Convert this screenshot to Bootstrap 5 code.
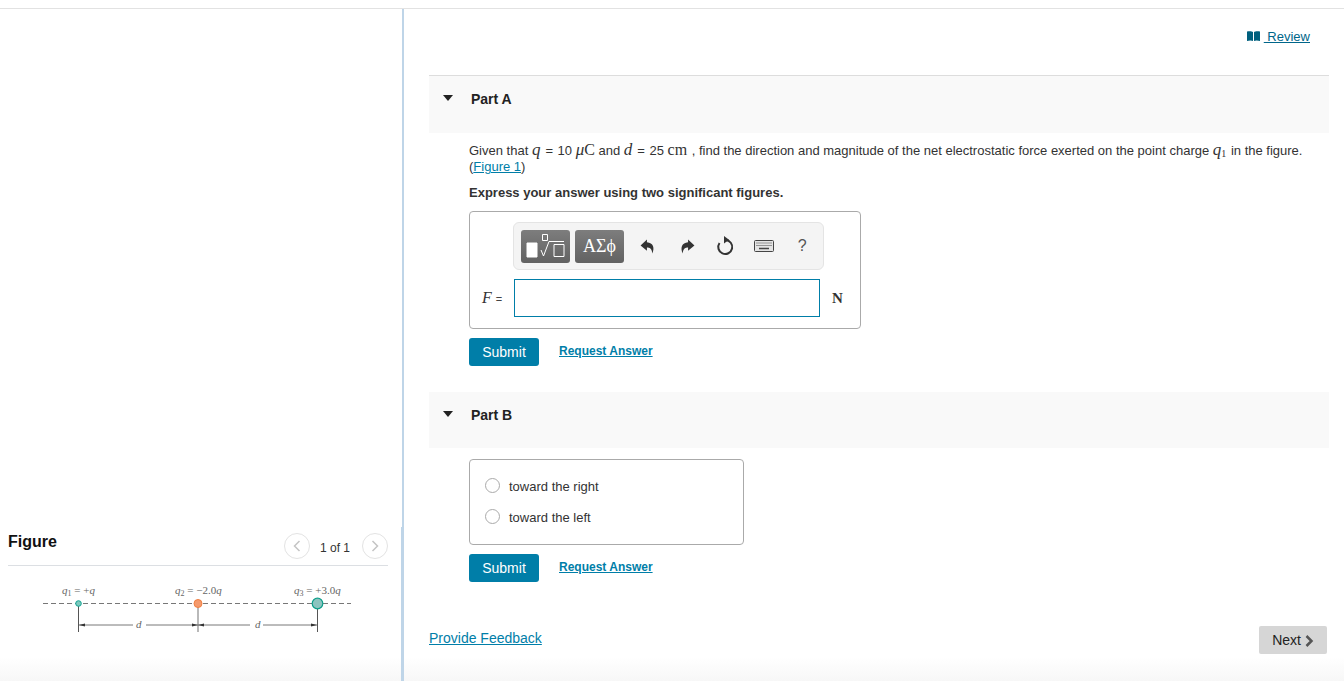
<!DOCTYPE html>
<html lang="en">
<head>
  <meta charset="UTF-8">
  <title>Part A</title>
  <meta name="viewport" content="width=device-width, initial-scale=1">
  <link rel="stylesheet" href="https://cdn.jsdelivr.net/npm/bootstrap@5.3.0/dist/css/bootstrap.min.css">
  <style>
    html, body { height: 100%; overflow: hidden; }
    body {
      font-family: "Liberation Sans", Arial, sans-serif;
      font-size: 13px;
      line-height: 16px;
      color: #333;
      padding-top: 8px;
      background: linear-gradient(#fff, #f7f7f7) no-repeat bottom / 100% 24px;
    }
    a { color: #007ea8; }
    .math { font-family: "Liberation Serif", "Times New Roman", serif; font-size: 16px; line-height: 1; }
    .math i { font-size: 17px; }
    .math small { font-family: "Liberation Sans", sans-serif; font-size: 13px; margin: 0 1px; }
    .math sub { font-size: 10px; bottom: -.2em; line-height: 0; }
    .math-unit { margin-right: 1px; }
    .math-end { margin-right: 1px; }
    .shell { height: 673px; border-top: 1px solid #e2e2e2; }
    .figure-pane { width: 404px; padding: 0 14px 43px 8px; border-right: 2px solid #bfd5e8; flex: none; position: relative; }
    .figure-pane::after { content: ""; position: absolute; right: 0; bottom: 0; width: 1px; height: 154px; background: #bfd5e8; }
    .figure-head { height: 34px; border-bottom: 1px solid #dcdfe3; }
    .figure-title { font-size: 16px; font-weight: 700; color: #111; margin: 0; line-height: 20px; }
    .pager { margin-top: 1px; }
    .pager-btn { width: 26px; height: 26px; border: 1px solid #e3e3e3; border-radius: 50%; background: #fff; padding: 0; }
    .pager-text { font-size: 12px; margin: 4px 12px 0 10px; color: #333; }
    .work-pane { padding: 0 15px 0 25px; min-width: 0; }
    .review-row { height: 66px; padding: 20px 19px 0 0; }
    .review-link { color: #00668a; }
    .part-head { background: #f9f9f9; padding: 15px 14px 0; font-size: 14px; font-weight: 700; color: #222; }
    .part-a { height: 58px; border-top: 1px solid #ddd; }
    .part-b { height: 56px; margin-top: 26px; }
    .caret-down { width: 0; height: 0; border: 5.5px solid transparent; border-top: 6px solid #222; border-bottom: 0; margin-right: 18px; }
    .part-body { padding-left: 40px; }
    .prompt { margin: 8px 0 10px; width: 860px; }
    .prompt-bold { font-weight: 700; margin-bottom: 10px; }
    .answer-box { width: 392px; height: 118px; border: 1px solid #aaa; border-radius: 4px; padding: 10px 0 0 12px; }
    .tool-bar { width: 311px; height: 48px; margin-left: 31px; background: #f4f4f4; border: 1px solid #e4e4e4; border-radius: 6px; padding: 6px 7px; }
    .tmpl-btn { height: 33px; width: 49px; flex: none; border-radius: 3px; background: linear-gradient(#7d7d7d, #626262); display: flex; align-items: center; justify-content: center; color: #fff; font-family: "Liberation Serif", serif; font-size: 18px; }
    .tool-gap { margin-left: 5px; }
    .tool-icon { width: 38.5px; flex: none; display: flex; align-items: center; justify-content: center; color: #555; }
    .input-row { margin-top: 9px; }
    .f-label { width: 32px; font-size: 11px; color: #444; }
    .f-label i { font-family: "Liberation Serif", serif; font-size: 16px; color: #333; margin-right: 4px; }
    .answer-input { width: 306px; height: 38px; border: 1px solid #007ea8; background: #fff; }
    .unit { font-family: "Liberation Serif", serif; font-weight: 700; font-size: 15px; margin-left: 12px; }
    .action-row { margin-top: 9px; }
    .btn.submit-btn { width: 70px; height: 28px; padding: 0; border: 0; border-radius: 3px; background: #007ea8; color: #fff; font-size: 14px; line-height: 28px; }
    .answer-link { font-size: 12px; font-weight: 700; margin-left: 20px; margin-top: -2px; }
    .choice-box { width: 275px; height: 86px; margin-top: 11px; border: 1px solid #aaa; border-radius: 4px; padding: 11px 15px; }
    .choice-row { height: 31px; display: flex; align-items: center; }
    .radio-dot { width: 15px; height: 15px; border: 1px solid #aaa; border-radius: 50%; background: #fff; margin-right: 9px; margin-top: -2px; flex: none; }
    .feedback-row { margin-top: 44px; padding-right: 2px; }
    .feedback-link { font-size: 14px; margin-top: 4px; }
    .btn.next-btn { width: 68px; height: 28px; padding: 0; border: 0; border-radius: 2px; background: #d6d6d6; color: #222; font-size: 14px; line-height: 28px; }
  </style>
</head>
<body>
  <div class="shell d-flex">
    <aside class="figure-pane d-flex flex-column justify-content-end">
      <div class="figure-head d-flex justify-content-between align-items-start">
        <h2 class="figure-title">Figure</h2>
        <div class="pager d-flex align-items-center">
          <button class="pager-btn d-flex align-items-center justify-content-center" type="button" aria-label="Previous">
            <svg width="8" height="12" viewBox="0 0 8 12"><path d="M6.5 1 1.5 6l5 5" fill="none" stroke="#c4c4c4" stroke-width="1.5"/></svg>
          </button>
          <span class="pager-text">1 of 1</span>
          <button class="pager-btn d-flex align-items-center justify-content-center" type="button" aria-label="Next">
            <svg width="8" height="12" viewBox="0 0 8 12"><path d="M1.5 1l5 5-5 5" fill="none" stroke="#c4c4c4" stroke-width="1.5"/></svg>
          </button>
        </div>
      </div>
      <svg class="d-block" width="380" height="72" viewBox="8 566 380 72" font-family="Liberation Serif, serif" font-style="italic" font-size="11" fill="#666">
        <text x="62" y="594">q<tspan font-size="8" dy="2" font-style="normal">1</tspan><tspan dy="-2" font-style="normal"> = +</tspan>q</text>
        <text x="175" y="594">q<tspan font-size="8" dy="2" font-style="normal">2</tspan><tspan dy="-2" font-style="normal"> = −2.0</tspan>q</text>
        <text x="294" y="594">q<tspan font-size="8" dy="2" font-style="normal">3</tspan><tspan dy="-2" font-style="normal"> = +3.0</tspan>q</text>
        <path d="M43 603.5H351" stroke="#777" stroke-width="1" stroke-dasharray="5 3" fill="none"/>
        <path d="M78.500 604V632M317.500 604V632" stroke="#555" stroke-width="1" fill="none"/>
        <path d="M198 604V632" stroke="#b9b9b9" stroke-width="2" fill="none"/>
        <path d="M79 625H133M146 625H250M263 625H317" stroke="#555" stroke-width=".8" fill="none"/>
        <path d="M79 625l6-1.500v3zM198 625l-6-1.500v3zM198 625l6-1.500v3zM317 625l-6-1.500v3z" fill="#333" stroke="none"/>
        <text x="136" y="628">d</text>
        <text x="255" y="628">d</text>
        <circle cx="78.500" cy="603.500" r="2.800" fill="#7fc8bd" stroke="#12a594"/>
        <circle cx="198" cy="603.500" r="4" fill="#f59a6c" stroke="#f07f42"/>
        <circle cx="317.500" cy="603.500" r="5.300" fill="#8cc4bf" stroke="#0f9f8b" stroke-width="1.200"/>
      </svg>
    </aside>

    <main class="work-pane flex-grow-1">
      <div class="review-row text-end">
        <svg width="13" height="10" viewBox="0 0 13 10" class="align-baseline"><path d="M0 .5C2 0 5 0 6 1v9C5 9.300 2 9.300 0 10zM13 .5C11 0 8 0 7 1v9c1-.7 4-.7 6 0z" fill="#00607e"/></svg>
        <a class="review-link" href="#">&nbsp;Review</a>
      </div>

      <section>
        <div class="part-head part-a d-flex align-items-start">
          <span class="caret-down mt-1"></span><span>Part A</span>
        </div>
        <div class="part-body">
          <p class="prompt">Given that <span class="math"><i>q</i> <small>=</small></span> 10 <span class="math"><i>μ</i>C</span> and <span class="math"><i>d</i> <small>=</small></span> 25 <span class="math"><span class="math-unit">cm</span></span> , find the direction and magnitude of the net electrostatic force exerted on the point charge <span class="math math-end"><i>q</i><sub>1</sub></span> in the figure. (<a href="#">Figure 1</a>)</p>
          <p class="prompt-bold">Express your answer using two significant figures.</p>
          <div class="answer-box">
            <div class="tool-bar d-flex align-items-center">
              <div class="tmpl-btn">
                <svg width="42" height="26" viewBox="0 0 42 26" fill="none" stroke="#fff" stroke-width="1"><path d="M2 10h10v14H2z" fill="#fff"/><path d="M17.500 1.500h5v6h-5zM29 11.500h10v12H29z"/><path d="M16 17l2.500 6L24 8.500h15"/></svg>
              </div>
              <div class="tmpl-btn tool-gap">ΑΣϕ</div>
              <div class="tool-icon tool-gap">
                <svg width="16" height="17" viewBox="0 0 15 16"><path d="M6.500 1.500.5 7l6 5V9c2.500 0 4.500.5 5 5.500 2.500-5 1-10-5-10.500z" fill="#333"/></svg>
              </div>
              <div class="tool-icon">
                <svg width="16" height="17" viewBox="0 0 15 16"><path d="M8.500 1.500l6 5.500-6 5V9c-2.500 0-4.500.5-5 5.500-2.500-5-1-10 5-10.500z" fill="#333"/></svg>
              </div>
              <div class="tool-icon">
                <svg width="18" height="20" viewBox="0 0 18 20" fill="none"><path d="M9.500 4A7 7 0 1 1 3.500 7" stroke="#333" stroke-width="2"/><path d="M8 0l5 3.800L8 7.500z" fill="#333"/></svg>
              </div>
              <div class="tool-icon">
                <svg width="20" height="12" viewBox="0 0 20 12"><rect x=".5" y=".5" width="19" height="11" rx="1" fill="#e4e4e4" stroke="#444"/><path d="M2.500 3h15M2.500 5.500h15" stroke="#444" stroke-dasharray="1 1"/><path d="M5 8.500h10" stroke="#444" stroke-width="1.500"/></svg>
              </div>
              <div class="tool-icon fs-6">?</div>
            </div>
            <div class="input-row d-flex align-items-center">
              <span class="f-label"><i>F</i>=</span>
              <div class="answer-input"></div>
              <span class="unit">N</span>
            </div>
          </div>
          <div class="action-row d-flex align-items-center">
            <button class="btn submit-btn" type="button">Submit</button>
            <a class="answer-link" href="#">Request Answer</a>
          </div>
        </div>
      </section>

      <section>
        <div class="part-head part-b d-flex align-items-start">
          <span class="caret-down mt-1"></span><span>Part B</span>
        </div>
        <div class="part-body">
          <div class="choice-box">
            <div class="choice-row"><span class="radio-dot"></span>toward the right</div>
            <div class="choice-row"><span class="radio-dot"></span>toward the left</div>
          </div>
          <div class="action-row d-flex align-items-center">
            <button class="btn submit-btn" type="button">Submit</button>
            <a class="answer-link" href="#">Request Answer</a>
          </div>
        </div>
      </section>

      <div class="feedback-row d-flex justify-content-between align-items-start">
        <a class="feedback-link" href="#">Provide Feedback</a>
        <button class="btn next-btn" type="button">Next <svg width="9" height="12" viewBox="0 0 9 12"><path d="M1.500 1l5 5-5 5" fill="none" stroke="#555" stroke-width="2.500"/></svg></button>
      </div>
    </main>
  </div>
  <script src="https://cdn.jsdelivr.net/npm/bootstrap@5.3.0/dist/js/bootstrap.bundle.min.js"></script>
</body>
</html>
